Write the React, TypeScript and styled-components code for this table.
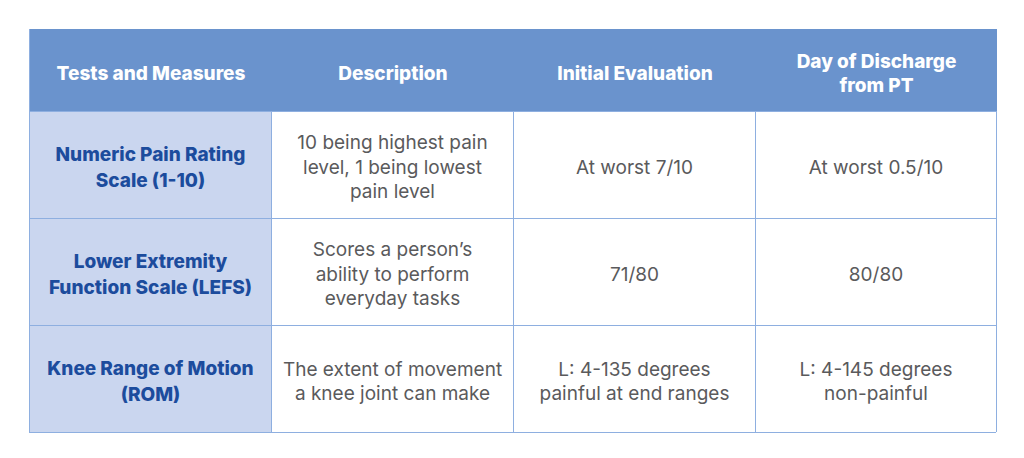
import React from 'react';
import styled, { createGlobalStyle } from 'styled-components';

const GlobalStyle = createGlobalStyle`
  html, body {
    margin: 0;
    padding: 0;
    background: #ffffff;
  }
`;

const Page = styled.div`
  padding: 29px 28px 0 29px;
  font-family: Inter, 'Open Sans', sans-serif;
`;

const Table = styled.div`
  display: grid;
  grid-template-columns: 242px 242px 242px 241px;
  grid-template-rows: 82px 107px 107px 107px;
  width: 967px;
  border-left: 1px solid #8eafe0;
  border-bottom: 1px solid #8eafe0;
  box-sizing: border-box;
`;

const HeadCell = styled.div`
  display: flex;
  align-items: center;
  justify-content: center;
  text-align: center;
  background: #6a93cd;
  color: #ffffff;
  font-weight: 800;
  font-size: 19px;
  line-height: 24px;
  padding: 7px 12px 0;
`;

const Cell = styled.div<{ $label?: boolean }>`
  display: flex;
  align-items: center;
  justify-content: center;
  text-align: center;
  padding: 6px 6px 0;
  border-right: 1px solid #8eafe0;
  border-top: 1px solid #8eafe0;
  box-sizing: border-box;
  font-size: 19px;
  line-height: ${(p) => (p.$label ? '26.5px' : '24.5px')};
  background: ${(p) => (p.$label ? '#cad6ef' : '#ffffff')};
  color: ${(p) => (p.$label ? '#1c4c9d' : '#5a5a5c')};
  font-weight: ${(p) => (p.$label ? 800 : 400)};
`;

const headers = ['Tests and Measures', 'Description', 'Initial Evaluation', 'Day of Discharge\nfrom PT'];

const rows: string[][] = [
  ['Numeric Pain Rating\nScale (1-10)', '10 being highest pain\nlevel, 1 being lowest\npain level', 'At worst 7/10', 'At worst 0.5/10'],
  ['Lower Extremity\nFunction Scale (LEFS)', 'Scores a person\u2019s\nability to perform\neveryday tasks', '71/80', '80/80'],
  ['Knee Range of Motion\n(ROM)', 'The extent of movement\na knee joint can make', 'L: 4-135 degrees\npainful at end ranges', 'L: 4-145 degrees\nnon-painful'],
];

const Lines = ({ text }: { text: string }) => (
  <span>
    {text.split('\n').map((line, i) => (
      <React.Fragment key={i}>
        {i > 0 && <br />}
        {line}
      </React.Fragment>
    ))}
  </span>
);

export default function App() {
  return (
    <Page>
      <GlobalStyle />
      <Table>
        {headers.map((h) => (
          <HeadCell key={h}>
            <Lines text={h} />
          </HeadCell>
        ))}
        {rows.map((row, r) =>
          row.map((c, i) => (
            <Cell key={`${r}-${i}`} $label={i === 0}>
              <Lines text={c} />
            </Cell>
          ))
        )}
      </Table>
    </Page>
  );
}
